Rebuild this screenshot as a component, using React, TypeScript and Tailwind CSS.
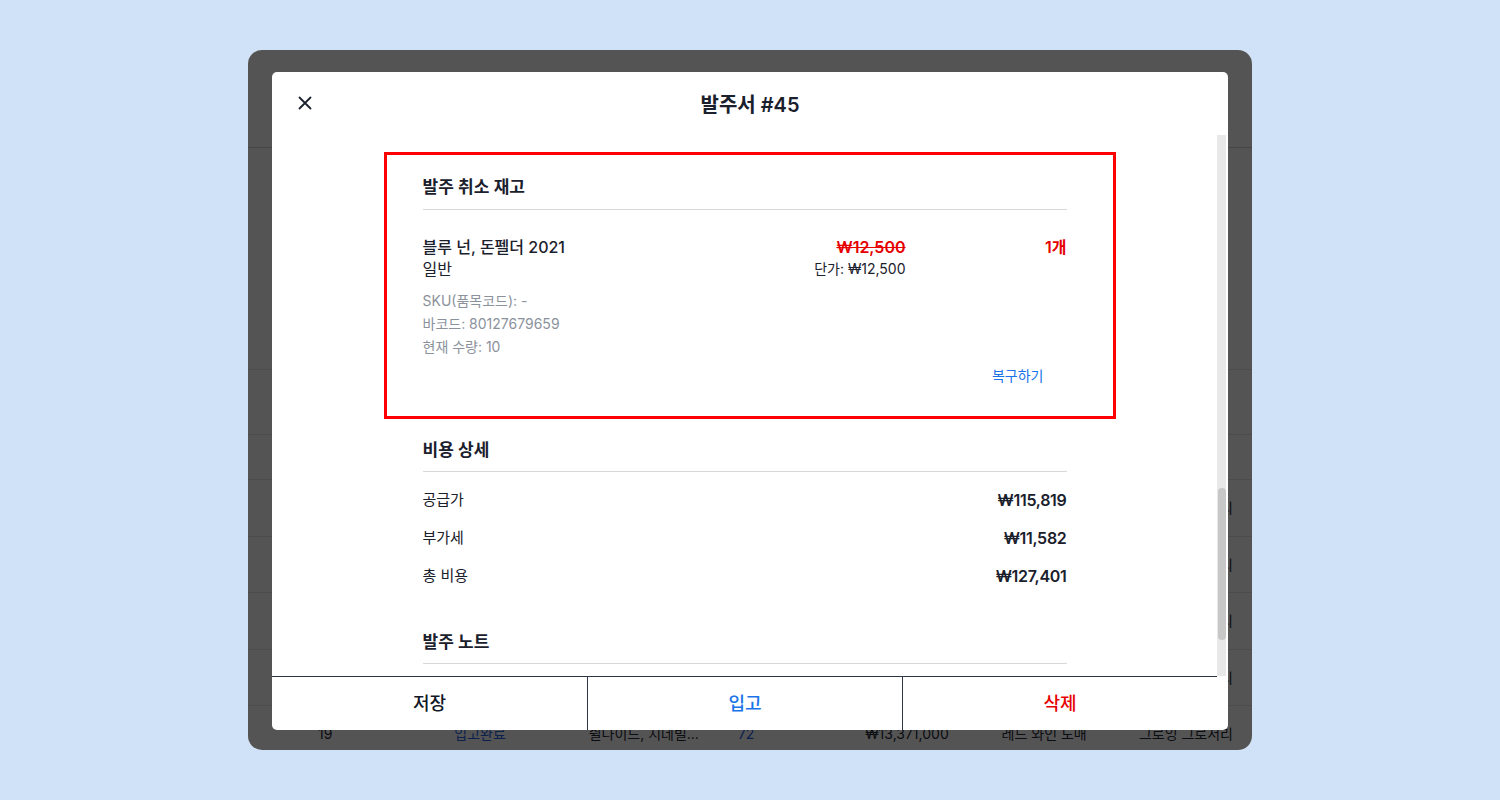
import React from "react";

const rows = [
  { id: "23", vendor: "그로잉 그로서리" },
  { id: "22", vendor: "그로잉 그로서리" },
  { id: "21", vendor: "그로잉 그로서리" },
  { id: "20", vendor: "그로잉 그로서리" },
];

function CloseIcon() {
  return (
    <svg width="14" height="14" viewBox="0 0 14 14" fill="none">
      <path d="M1.5 1.5L12.5 12.5M12.5 1.5L1.5 12.5" stroke="#1a202c" strokeWidth="1.8" strokeLinecap="round" />
    </svg>
  );
}

export default function App() {
  return (
    <div className="w-[1500px] h-[800px] bg-[#d0e2f8] flex items-center justify-center font-[Inter,'Noto_Sans_CJK_KR',sans-serif]">
      <div className="relative w-[1004px] h-[700px] rounded-[14px] overflow-hidden bg-white">
        {/* background app */}
        <div className="flex flex-col h-full text-[14px] text-[#1f2937]">
          <div className="h-[98px] shrink-0 border-b border-[#d1d5db]" />
          <div className="h-[222px] shrink-0 border-b border-[#e5e7eb]" />
          <div className="h-[65px] shrink-0 border-b border-[#e5e7eb]" />
          <div className="h-[45px] shrink-0 border-b border-[#e5e7eb]" />
          {rows.map((r) => (
            <div key={r.id} className="h-[56.5px] shrink-0 flex items-center justify-end pr-[19px] border-b border-[#e5e7eb] whitespace-nowrap">
              <div>{r.vendor}</div>
            </div>
          ))}
          <div className="h-[56.5px] shrink-0 flex items-center pl-[70px] border-b border-[#e5e7eb] whitespace-nowrap">
            <div className="w-[137px]">19</div>
            <div className="w-[135px] text-[#2563eb]">입고완료</div>
            <div className="w-[150px]">쉴다이드, 시데빌...</div>
            <div className="w-[128px] text-[#2563eb]">72</div>
            <div className="w-[137px]">₩13,371,000</div>
            <div className="w-[138px]">레드 와인 도매</div>
            <div className="flex-1 text-right pr-[19px]">그로잉 그로서리</div>
          </div>
        </div>

        {/* overlay */}
        <div className="absolute inset-0 bg-black/[0.67]" />

        {/* modal */}
        <div className="absolute left-[24px] top-[22px] w-[956px] h-[658px] rounded-[5px] bg-white flex flex-col overflow-hidden text-[#1a202c]">
          <div className="relative h-[63px] shrink-0 flex items-center justify-center">
            <button className="absolute left-[26px] top-[24px] w-[14px] h-[14px] flex items-center justify-center">
              <CloseIcon />
            </button>
            <h1 className="text-[20px] leading-[28px] font-semibold pt-[3px]">발주서 #45</h1>
          </div>

          <div className="flex-1 flex min-h-0">
            <div className="flex-1 flex flex-col min-w-0">
              <div className="flex-1 overflow-hidden pt-[17px]">
                <div className="w-[644px] mx-auto">
                  {/* highlighted section */}
                  <div className="-ml-[39px] -mr-[49px] border-[3px] border-[#ff0000] pl-[36px] pr-[46px] pt-[20px] pb-[30px]">
                    <div className="text-[17px] leading-[24px] font-semibold pb-[10px] border-b border-[#d6d8db]">발주 취소 재고</div>
                    <div className="mt-[26px] flex">
                      <div className="flex-1">
                        <div className="text-[16px] leading-[22px] font-medium">블루 넌, 돈펠더 2021</div>
                        <div className="text-[16px] leading-[22px]">일반</div>
                        <div className="mt-[9px] text-[14px] leading-[23px] text-[#8b929c]">
                          <div>SKU(품목코드): -</div>
                          <div>바코드: 80127679659</div>
                          <div>현재 수량: 10</div>
                        </div>
                      </div>
                      <div className="text-right">
                        <div className="text-[16px] leading-[22px] font-semibold text-[#e60000] line-through">₩12,500</div>
                        <div className="text-[14px] leading-[22px]">단가: ₩12,500</div>
                      </div>
                      <div className="w-[161px] text-right text-[16px] leading-[22px] font-semibold text-[#e60000]">1개</div>
                    </div>
                    <div className="mt-[8px] flex justify-end pr-[23px]">
                      <button className="text-[14px] leading-[20px] text-[#1a73e8]">복구하기</button>
                    </div>
                  </div>

                  {/* cost details */}
                  <div className="mt-[19px] text-[17px] leading-[24px] font-semibold pb-[9px] border-b border-[#d6d8db]">비용 상세</div>
                  <div className="mt-[17px] flex flex-col gap-[16px]">
                    <div className="flex justify-between items-center leading-[22px]">
                      <span className="text-[15px]">공급가</span>
                      <span className="text-[16px] font-semibold tracking-[-0.3px]">₩115,819</span>
                    </div>
                    <div className="flex justify-between items-center leading-[22px]">
                      <span className="text-[15px]">부가세</span>
                      <span className="text-[16px] font-semibold tracking-[-0.3px]">₩11,582</span>
                    </div>
                    <div className="flex justify-between items-center leading-[22px]">
                      <span className="text-[15px]">총 비용</span>
                      <span className="text-[16px] font-semibold tracking-[-0.3px]">₩127,401</span>
                    </div>
                  </div>

                  <div className="mt-[43px] text-[17px] leading-[24px] font-semibold pb-[9px] border-b border-[#d6d8db]">발주 노트</div>
                  <div className="h-[120px]" />
                </div>
              </div>

              <div className="h-[54px] shrink-0 border-t border-[#2d3748] grid grid-cols-3">
                <button className="text-[18px] font-medium text-[#111827]">저장</button>
                <button className="text-[18px] font-medium text-[#1a73e8] border-l border-[#2d3748]">입고</button>
                <button className="text-[18px] font-medium text-[#e60000] border-l border-[#2d3748]">삭제</button>
              </div>
            </div>

            <div className="w-[11px] shrink-0 pr-[2px]">
              <div className="h-[541px] bg-[#e8e8e8] flex flex-col">
                <div className="h-[353px]" />
                <div className="h-[152px] mx-[0.5px] rounded-full bg-[#c7c7c7]" />
              </div>
            </div>
          </div>
        </div>
      </div>
    </div>
  );
}
